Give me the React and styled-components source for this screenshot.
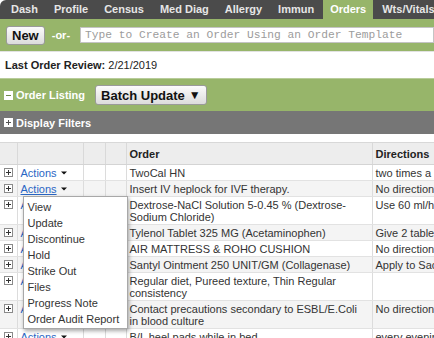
import React from "react";
import styled, { createGlobalStyle } from "styled-components";

const GREEN = "#97b56a";

const GlobalStyle = createGlobalStyle`
  html, body {
    margin: 0;
    padding: 0;
    background: #fff;
    overflow: hidden;
  }
  body {
    font-family: "Liberation Sans", Arial, sans-serif;
    color: #333;
  }
`;

const Page = styled.div`
  width: 434px;
  height: 338px;
  overflow: hidden;
  position: relative;
`;

const TabBar = styled.div`
  display: flex;
  height: 19px;
  background: #4b4b4b;
  border-top-left-radius: 6px;
  padding-left: 4px;
  gap: 2px;
`;

const Tab = styled.div`
  padding: 0 7px;
  height: 19px;
  line-height: 19px;
  font-size: 11px;
  font-weight: bold;
  color: ${(p) => (p.$active ? "#fff" : "#e6e6e6")};
  background: ${(p) => (p.$active ? GREEN : "transparent")};
  white-space: nowrap;
`;

const NewBar = styled.div`
  display: flex;
  align-items: center;
  height: 32px;
  background: ${GREEN};
  padding-left: 6px;
`;

const GrayButton = styled.button`
  font-family: "Liberation Sans", Arial, sans-serif;
  font-weight: bold;
  font-size: 13px;
  color: #111;
  height: ${(p) => p.$h || 19}px;
  padding: 0 5px;
  border: 1px solid #9a9a9a;
  border-radius: 3px;
  background: linear-gradient(#fbfbfb, #dcdcdc);
  display: flex;
  align-items: center;
  gap: 4px;
  white-space: nowrap;
`;

const OrText = styled.span`
  color: #fff;
  font-weight: bold;
  font-size: 11px;
  margin: 0 10px 0 7px;
`;

const OrderInput = styled.input`
  flex: 1;
  height: 16px;
  box-sizing: border-box;
  border: 1px solid #c4c4c4;
  background: #fff;
  padding: 0 4px;
  font-family: "Liberation Mono", "Courier New", monospace;
  font-size: 11.25px;
  &::placeholder {
    color: #9c9c9c;
  }
`;

const ReviewRow = styled.div`
  height: 27px;
  display: flex;
  align-items: center;
  padding-left: 5px;
  font-size: 11px;
  color: #222;
  border-top: 1px solid #e2e2e2;
  box-sizing: border-box;
`;

const Label = styled.b`
  margin-right: 3px;
`;

const SectionBar = styled.div`
  display: flex;
  align-items: center;
  gap: 3px;
  height: ${(p) => p.$h}px;
  background: ${(p) => p.$bg};
  border-top: ${(p) => (p.$line ? "1px solid #b8cc9a" : "none")};
  box-sizing: border-box;
  padding-left: 4px;
  color: #fff;
  font-weight: bold;
  font-size: 11px;
`;

const SectionTitle = styled.span`
  margin-right: 7px;
`;

const TableWrap = styled.div`
  margin-top: 8px;
  width: 540px;
`;

const Table = styled.table`
  width: 540px;
  table-layout: fixed;
  border-collapse: collapse;
  font-size: 11px;
  color: #333;
`;

const HeadCell = styled.th`
  height: 21px;
  background: #ededed;
  border-top: 1px solid #d8d8d8;
  border-left: 1px solid #d9d9d9;
  border-bottom: 1px solid #d4d4d4;
  text-align: left;
  padding: 0 3px;
  font-weight: bold;
  color: #222;
  &:first-child {
    border-left: none;
  }
`;

const Row = styled.tr`
  background: ${(p) => (p.$alt ? "#f4f4f4" : "#fff")};
`;

const Cell = styled.td`
  border-left: 1px solid #dcdcdc;
  border-bottom: 1px solid #e2e2e2;
  padding: 2px 3px 1px;
  line-height: 12px;
  vertical-align: top;
  position: relative;
  &:first-child {
    border-left: none;
    padding: 3px 0 0 4px;
  }
`;

const ActionsLink = styled.span`
  color: #2a66c4;
  text-decoration: ${(p) => (p.$hover ? "underline" : "none")};
  white-space: nowrap;
`;

const Caret = styled.svg`
  display: inline-block;
  margin-left: 4px;
  vertical-align: 2px;
`;

const Menu = styled.div`
  position: absolute;
  left: 5px;
  top: 15px;
  width: 105px;
  box-sizing: border-box;
  padding: 2px 0 1px 4px;
  background: #fff;
  border: 1px solid #a8a8a8;
  box-shadow: 1px 2px 4px rgba(0, 0, 0, 0.35);
  z-index: 5;
`;

const MenuItem = styled.div`
  height: 16px;
  line-height: 16px;
  font-size: 11px;
  color: #333;
  white-space: nowrap;
`;

const BoxIcon = ({ minus, fill = "#fff", stroke = "#8a8a8a", mark = "#333" }) => (
  <svg width="9" height="9" viewBox="0 0 9 9" style={{ display: "block" }}>
    <rect x="0.5" y="0.5" width="8" height="8" fill={fill} stroke={stroke} />
    <line x1="2" y1="4.5" x2="7" y2="4.5" stroke={mark} strokeWidth="1" />
    {!minus && <line x1="4.5" y1="2" x2="4.5" y2="7" stroke={mark} strokeWidth="1" />}
  </svg>
);

const tabs = ["Dash", "Profile", "Census", "Med Diag", "Allergy", "Immun", "Orders", "Wts/Vitals"];

const menuItems = [
  "View",
  "Update",
  "Discontinue",
  "Hold",
  "Strike Out",
  "Files",
  "Progress Note",
  "Order Audit Report",
];

const orders = [
  { order: "TwoCal HN", dir: "two times a day" },
  { order: "Insert IV heplock for IVF therapy.", dir: "No directions", menu: true },
  { order: "Dextrose-NaCl Solution 5-0.45 % (Dextrose-Sodium Chloride)", dir: "Use 60 ml/hr" },
  { order: "Tylenol Tablet 325 MG (Acetaminophen)", dir: "Give 2 tablets" },
  { order: "AIR MATTRESS & ROHO CUSHION", dir: "No directions" },
  { order: "Santyl Ointment 250 UNIT/GM (Collagenase)", dir: "Apply to Sacrum" },
  { order: "Regular diet, Pureed texture, Thin Regular consistency", dir: "" },
  { order: "Contact precautions secondary to ESBL/E.Coli in blood culture", dir: "No directions" },
  { order: "B/L heel pads while in bed", dir: "every evening" },
];

export default function App() {
  return (
    <Page>
      <GlobalStyle />
      <TabBar>
        {tabs.map((t) => (
          <Tab key={t} $active={t === "Orders"}>
            {t}
          </Tab>
        ))}
      </TabBar>
      <NewBar>
        <GrayButton $h={19}>New</GrayButton>
        <OrText>-or-</OrText>
        <OrderInput placeholder="Type to Create an Order Using an Order Template" />
      </NewBar>
      <ReviewRow>
        <Label>Last Order Review:</Label>
        2/21/2019
      </ReviewRow>
      <SectionBar $h={33} $bg={GREEN} $line>
        <BoxIcon minus stroke="#fff" mark="#6f8a48" />
        <SectionTitle>Order Listing</SectionTitle>
        <GrayButton $h={20}>
          Batch Update <span style={{ fontSize: "12px" }}>▼</span>
        </GrayButton>
      </SectionBar>
      <SectionBar $h={23} $bg="#767676">
        <BoxIcon stroke="#fff" mark="#555" />
        <span>Display Filters</span>
      </SectionBar>
      <TableWrap>
        <Table>
          <colgroup>
            <col style={{ width: "17px" }} />
            <col style={{ width: "66px" }} />
            <col style={{ width: "22px" }} />
            <col style={{ width: "21px" }} />
            <col style={{ width: "246px" }} />
            <col />
          </colgroup>
          <thead>
            <tr>
              <HeadCell />
              <HeadCell />
              <HeadCell />
              <HeadCell />
              <HeadCell>Order</HeadCell>
              <HeadCell>Directions</HeadCell>
            </tr>
          </thead>
          <tbody>
            {orders.map((o, i) => (
              <Row key={i} $alt={i % 2 === 1}>
                <Cell>
                  <BoxIcon />
                </Cell>
                <Cell>
                  <ActionsLink $hover={o.menu}>Actions</ActionsLink>
                  <Caret width="6" height="4" viewBox="0 0 6 4">
                    <path d="M0 0.5 H6 L3 3.5 Z" fill="#111" />
                  </Caret>
                  {o.menu && (
                    <Menu>
                      {menuItems.map((m) => (
                        <MenuItem key={m}>{m}</MenuItem>
                      ))}
                    </Menu>
                  )}
                </Cell>
                <Cell />
                <Cell />
                <Cell>{o.order}</Cell>
                <Cell>{o.dir}</Cell>
              </Row>
            ))}
          </tbody>
        </Table>
      </TableWrap>
    </Page>
  );
}
